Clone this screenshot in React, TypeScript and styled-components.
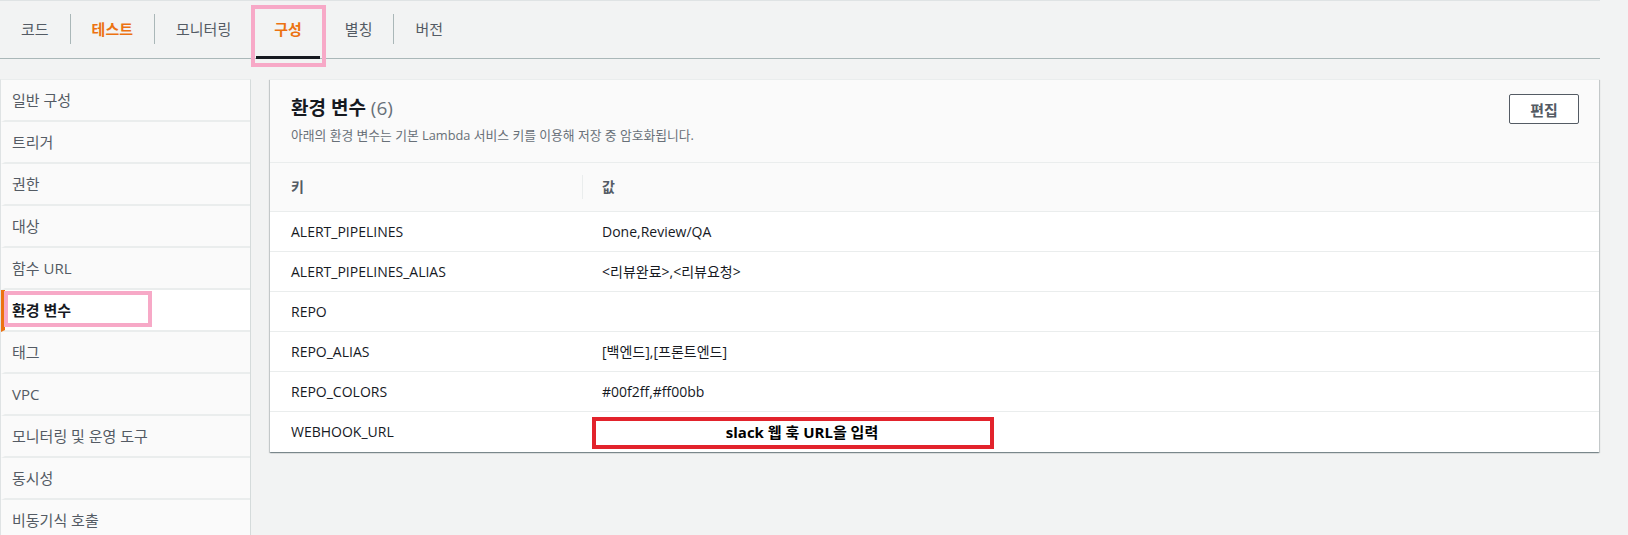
import React from 'react';
import styled, { createGlobalStyle, css } from 'styled-components';

const GlobalStyle = createGlobalStyle`
  html, body {
    margin: 0;
    padding: 0;
    background: #f2f3f3;
  }
  body {
    font-family: 'Open Sans', 'Noto Sans CJK KR', sans-serif;
    font-size: 14px;
    color: #16191f;
  }
  *, *::before, *::after {
    box-sizing: border-box;
  }
`;

const Page = styled.div`
  width: 1600px;
  min-height: 100vh;
  display: flex;
  flex-direction: column;
`;

const TabBar = styled.div`
  display: flex;
  align-items: stretch;
  height: 59px;
  border-top: 1px solid #dfe3e4;
  border-bottom: 1px solid #aab7b8;
`;

const Tab = styled.div<{ $accent?: boolean; $active?: boolean }>`
  position: relative;
  display: flex;
  align-items: center;
  padding: 0 21px 2px;
  font-size: 15px;
  line-height: 20px;
  color: #545b64;
  white-space: nowrap;

  ${(p) =>
    p.$accent &&
    css`
      color: #ec7211;
      font-weight: 700;
    `}

  ${(p) =>
    p.$active &&
    css`
      &::before {
        content: '';
        position: absolute;
        left: 3px;
        right: 3px;
        bottom: -1px;
        height: 3px;
        background: #16191f;
      }
      &::after {
        content: '';
        position: absolute;
        left: -2px;
        top: 4px;
        width: 75px;
        height: 62px;
        border: 4px solid #f7a9c7;
      }
    `}
`;

const TabDivider = styled.span<{ $hidden?: boolean }>`
  width: 1px;
  height: 30px;
  align-self: center;
  margin-bottom: 2px;
  background: ${(p) => (p.$hidden ? 'transparent' : '#aab7b8')};
`;

const Body = styled.div`
  flex: 1;
  display: flex;
  margin-top: 20px;
`;

const Sidebar = styled.nav`
  width: 251px;
  flex-shrink: 0;
  background: #fafafa;
  border-top: 1px solid #eaeded;
  border-left: 1px solid #dfe3e4;
  border-right: 1px solid #d5dbdb;
`;

const NavItem = styled.div<{ $active?: boolean }>`
  position: relative;
  height: 42px;
  display: flex;
  align-items: center;
  padding-left: 7px;
  border-left: 4px solid transparent;
  border-bottom: 2px solid #eaeded;
  font-size: 15px;
  line-height: 20px;
  color: #545b64;

  ${(p) =>
    p.$active &&
    css`
      background: #fff;
      border-left-color: #ec7211;
      color: #16191f;
      font-weight: 700;

      &::after {
        content: '';
        position: absolute;
        left: -1px;
        top: 1px;
        width: 148px;
        height: 36px;
        border: 4px solid #f7a9c7;
      }
    `}
`;

const Main = styled.main`
  flex: 1;
  padding: 0 1px 0 19px;
`;

const Card = styled.section`
  background: #fff;
  border-top: 1px solid #eaeded;
  box-shadow: 0 1px 1px 0 rgba(0, 28, 36, 0.3), 1px 1px 1px 0 rgba(0, 28, 36, 0.15),
    -1px 1px 1px 0 rgba(0, 28, 36, 0.15);
`;

const CardHeader = styled.header`
  display: flex;
  justify-content: space-between;
  align-items: flex-start;
  padding: 14px 20px 19px 21px;
  background: #fafafa;
  border-bottom: 1px solid #eaeded;
`;

const HeaderText = styled.div`
  padding-top: 3px;
`;

const Title = styled.h2`
  margin: 0;
  font-size: 19px;
  line-height: 22px;
  font-weight: 700;
  color: #16191f;
`;

const Count = styled.span`
  font-weight: 400;
  color: #687078;
`;

const Description = styled.p`
  margin: 8px 0 0;
  font-size: 12.8px;
  line-height: 16px;
  color: #687078;
`;

const EditButton = styled.button`
  width: 70px;
  height: 30px;
  background: #fff;
  border: 1px solid #545b64;
  border-radius: 2px;
  font-family: inherit;
  font-size: 15px;
  font-weight: 700;
  color: #545b64;
  cursor: pointer;
`;

const Row = styled.div<{ $head?: boolean; $last?: boolean }>`
  display: grid;
  grid-template-columns: 312px 1fr;
  align-items: center;
  height: ${(p) => (p.$head ? 49 : 40)}px;
  border-bottom: ${(p) => (p.$last ? 'none' : '1px solid #eaeded')};
  background: ${(p) => (p.$head ? '#fafafa' : '#fff')};
  line-height: 20px;
`;

const KeyCell = styled.div<{ $head?: boolean }>`
  padding-left: 21px;
  color: ${(p) => (p.$head ? '#545b64' : '#16191f')};
  font-weight: ${(p) => (p.$head ? 700 : 400)};
`;

const ValueCell = styled.div<{ $head?: boolean }>`
  position: relative;
  height: 100%;
  display: flex;
  align-items: center;
  padding-left: 20px;
  color: ${(p) => (p.$head ? '#545b64' : '#16191f')};
  font-weight: ${(p) => (p.$head ? 700 : 400)};

  ${(p) =>
    p.$head &&
    css`
      height: 24px;
      padding-left: 19px;
      border-left: 1px solid #eaeded;
    `}
`;

const Annotation = styled.div`
  position: absolute;
  left: 10px;
  top: 5px;
  width: 402px;
  height: 32px;
  border: 4px solid #e2232c;
  display: flex;
  align-items: center;
  justify-content: center;
  padding: 0 0 3px 18px;
  font-size: 15px;
  font-weight: 700;
  color: #000;
`;

const tabs = [
  { label: '코드' },
  { label: '테스트', accent: true },
  { label: '모니터링' },
  { label: '구성', accent: true, active: true },
  { label: '별칭' },
  { label: '버전' },
];

const navItems = [
  '일반 구성',
  '트리거',
  '권한',
  '대상',
  '함수 URL',
  '환경 변수',
  '태그',
  'VPC',
  '모니터링 및 운영 도구',
  '동시성',
  '비동기식 호출',
];

const envVars = [
  { key: 'ALERT_PIPELINES', value: 'Done,Review/QA' },
  { key: 'ALERT_PIPELINES_ALIAS', value: '<리뷰완료>,<리뷰요청>' },
  { key: 'REPO', value: '' },
  { key: 'REPO_ALIAS', value: '[백엔드],[프론트엔드]' },
  { key: 'REPO_COLORS', value: '#00f2ff,#ff00bb' },
  { key: 'WEBHOOK_URL', value: '', note: 'slack 웹 훅 URL을 입력' },
];

export default function App() {
  return (
    <>
      <GlobalStyle />
      <Page>
        <TabBar>
          {tabs.map((t, i) => (
            <React.Fragment key={t.label}>
              {i > 0 && <TabDivider $hidden={i === 3 || i === 4} />}
              <Tab $accent={t.accent} $active={t.active}>
                {t.label}
              </Tab>
            </React.Fragment>
          ))}
        </TabBar>

        <Body>
          <Sidebar>
            {navItems.map((item) => (
              <NavItem key={item} $active={item === '환경 변수'}>
                {item}
              </NavItem>
            ))}
          </Sidebar>

          <Main>
            <Card>
              <CardHeader>
                <HeaderText>
                  <Title>
                    환경 변수 <Count>(6)</Count>
                  </Title>
                  <Description>
                    아래의 환경 변수는 기본 Lambda 서비스 키를 이용해 저장 중 암호화됩니다.
                  </Description>
                </HeaderText>
                <EditButton>편집</EditButton>
              </CardHeader>

              <Row $head>
                <KeyCell $head>키</KeyCell>
                <ValueCell $head>값</ValueCell>
              </Row>
              {envVars.map((v, i) => (
                <Row key={v.key} $last={i === envVars.length - 1}>
                  <KeyCell>{v.key}</KeyCell>
                  <ValueCell>
                    {v.value}
                    {v.note && <Annotation>{v.note}</Annotation>}
                  </ValueCell>
                </Row>
              ))}
            </Card>
          </Main>
        </Body>
      </Page>
    </>
  );
}
